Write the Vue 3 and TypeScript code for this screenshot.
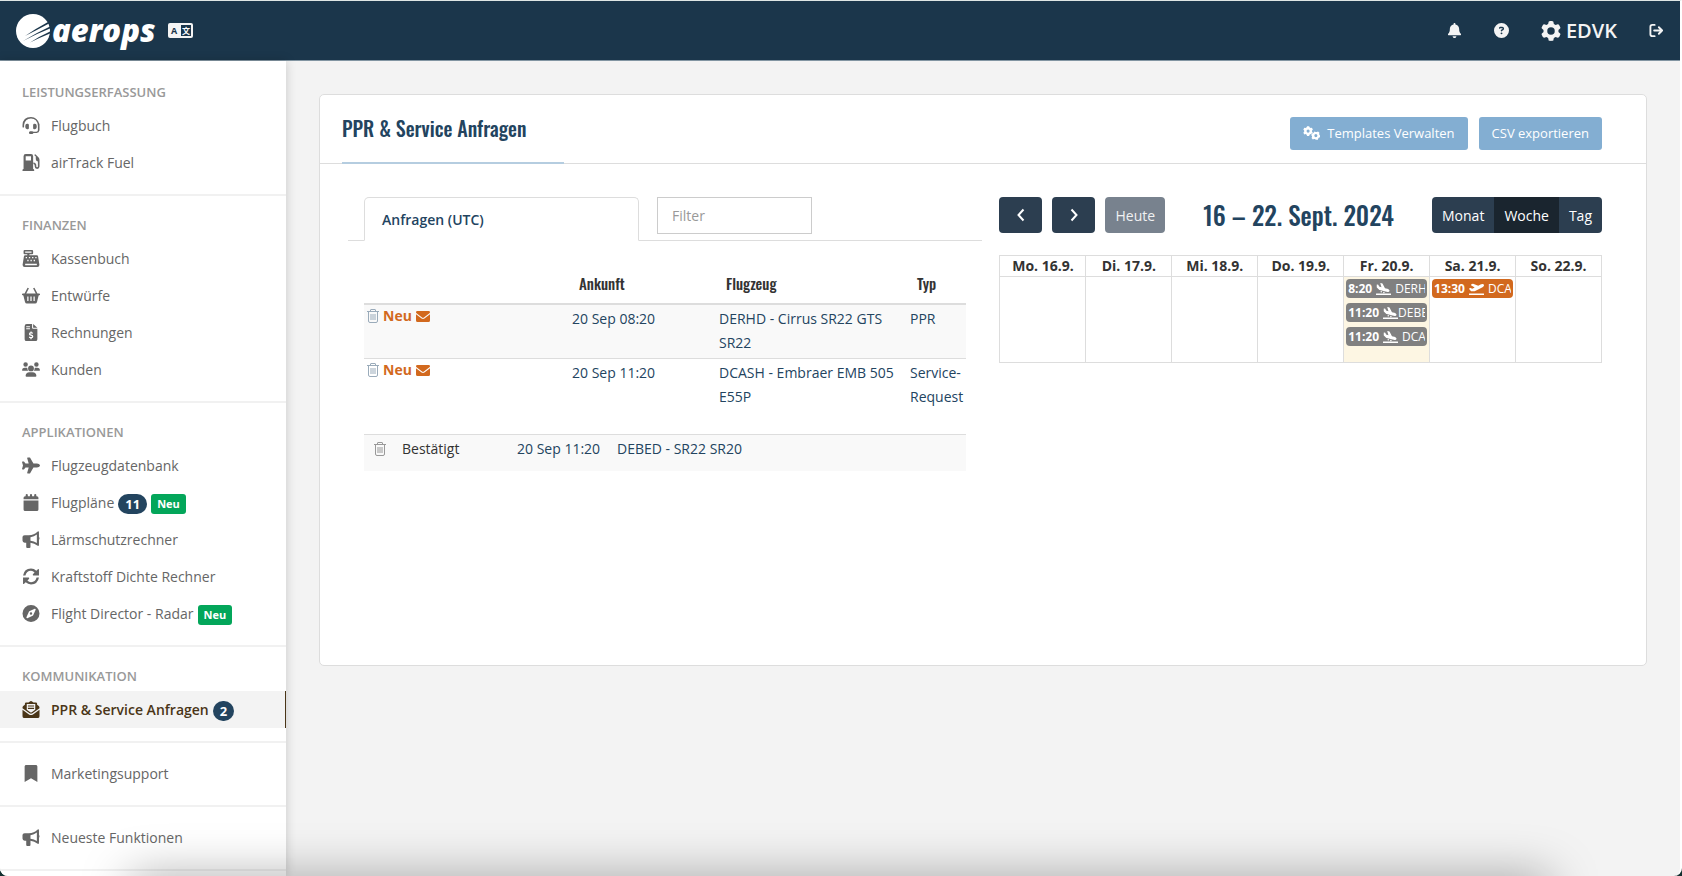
<script setup lang="ts">
import { ref } from 'vue'

interface NavItem {
  label: string
  icon: string
  count?: number
  isNew?: boolean
  active?: boolean
}
interface NavSection {
  title?: string
  items: NavItem[]
}
interface Shape {
  box: string
  d: string
}
interface FlightEvent {
  time: string
  kind: 'arrival' | 'departure'
  text: string
  tight?: boolean
}
interface Day {
  label: string
  today?: boolean
  events: FlightEvent[]
}

const icons: Record<string, Shape> = {
  bell: {
    box: '0 0 448 512',
    d: 'M224 0c-17.7 0-32 14.3-32 32V51.2C119 66 64 130.6 64 208v18.8c0 47-17.3 92.4-48.5 127.6l-7.4 8.3c-8.4 9.4-10.4 22.9-5.3 34.4S19.4 416 32 416H416c12.6 0 24-7.4 29.2-18.9s3.1-25-5.3-34.4l-7.4-8.3C401.3 319.2 384 273.9 384 226.8V208c0-77.4-55-142-128-156.8V32c0-17.7-14.3-32-32-32zm45.3 493.3c12-12 18.7-28.3 18.7-45.3H224 160c0 17 6.7 33.3 18.7 45.3s28.3 18.7 45.3 18.7s33.3-6.7 45.3-18.7z',
  },
  question: {
    box: '0 0 512 512',
    d: 'M256 512A256 256 0 1 0 256 0a256 256 0 1 0 0 512zM169.8 165.3c7.9-22.3 29.1-37.3 52.8-37.3h58.3c34.9 0 63.1 28.3 63.1 63.1c0 22.6-12.1 43.5-31.7 54.8L280 264.4c-.2 13-10.9 23.6-24 23.6c-13.3 0-24-10.7-24-24V250.5c0-8.6 4.6-16.5 12.1-20.8l44.3-25.4c4.7-2.7 7.6-7.7 7.6-13.1c0-8.4-6.8-15.1-15.1-15.1H222.6c-3.4 0-6.4 2.1-7.5 5.3l-.4 1.2c-4.4 12.5-18.2 19-30.6 14.6s-19-18.2-14.6-30.6l.4-1.2zM224 352a32 32 0 1 1 64 0 32 32 0 1 1 -64 0z',
  },
  gear: {
    box: '0 0 512 512',
    d: 'M495.9 166.6c3.2 8.7 .5 18.4-6.4 24.6l-43.3 39.4c1.1 8.3 1.7 16.8 1.7 25.4s-.6 17.1-1.7 25.4l43.3 39.4c6.9 6.2 9.6 15.9 6.4 24.6c-4.4 11.9-9.7 23.3-15.8 34.3l-4.7 8.1c-6.6 11-14 21.4-22.1 31.2c-5.9 7.2-15.7 9.6-24.5 6.8l-55.7-17.7c-13.4 10.3-28.2 18.9-44 25.4l-12.5 57.1c-2 9.1-9 16.3-18.2 17.8c-13.8 2.3-28 3.5-42.5 3.5s-28.7-1.2-42.5-3.5c-9.2-1.5-16.2-8.7-18.2-17.8l-12.5-57.1c-15.8-6.5-30.6-15.1-44-25.4L83.1 425.9c-8.8 2.8-18.6 .3-24.5-6.8c-8.1-9.8-15.5-20.2-22.1-31.2l-4.7-8.1c-6.1-11-11.4-22.4-15.8-34.3c-3.2-8.7-.5-18.4 6.4-24.6l43.3-39.4C64.6 273.1 64 264.6 64 256s.6-17.1 1.7-25.4L22.4 191.2c-6.9-6.2-9.6-15.9-6.4-24.6c4.4-11.9 9.7-23.3 15.8-34.3l4.7-8.1c6.6-11 14-21.4 22.1-31.2c5.9-7.2 15.7-9.6 24.5-6.8l55.7 17.7c13.4-10.3 28.2-18.9 44-25.4l12.5-57.1c2-9.1 9-16.3 18.2-17.8C227.3 1.2 241.5 0 256 0s28.7 1.2 42.5 3.5c9.2 1.5 16.2 8.7 18.2 17.8l12.5 57.1c15.8 6.5 30.6 15.1 44 25.4l55.7-17.7c8.8-2.8 18.6-.3 24.5 6.8c8.1 9.8 15.5 20.2 22.1 31.2l4.7 8.1c6.1 11 11.4 22.4 15.8 34.3zM256 352a96 96 0 1 0 0-192 96 96 0 1 0 0 192z',
  },
  plane: {
    box: '0 0 576 512',
    d: 'M480 192H365.71L260.61 8.06A16.014 16.014 0 0 0 246.71 0h-65.5c-10.63 0-18.3 10.17-15.38 20.39L214.86 192H112l-43.2-57.6c-3.02-4.03-7.77-6.4-12.8-6.4H16.01C5.6 128-2.04 137.78.49 147.88L32 256 .49 364.12C-2.04 374.22 5.6 384 16.01 384H56c5.04 0 9.78-2.37 12.8-6.4L112 320h102.86l-49.03 171.6c-2.92 10.22 4.75 20.4 15.38 20.4h65.5c5.74 0 11.04-3.08 13.89-8.06L365.71 320H480c35.35 0 96-28.65 96-64s-60.65-64-96-64z',
  },
  arrival: {
    box: '0 0 640 512',
    d: 'M624 448H16c-8.84 0-16 7.16-16 16v32c0 8.84 7.16 16 16 16h608c8.84 0 16-7.16 16-16v-32c0-8.84-7.16-16-16-16zM44.81 205.66l88.74 80a62.607 62.607 0 0 0 25.47 13.93l287.6 78.35c26.48 7.21 54.56 8.72 81 1.36 29.67-8.27 43.44-21.21 47.25-35.71 3.83-14.5-1.73-32.71-23.37-54.96-19.28-19.82-44.35-32.79-70.83-40l-97.51-26.56L282.8 30.22c-1.51-5.81-5.95-10.35-11.66-11.91L206.05.58c-10.56-2.88-20.9 5.32-20.71 16.44l47.92 164.21-102.2-27.84-27.59-67.88c-1.93-4.89-6.01-8.57-11.02-9.93L52.72 64.75c-10.34-2.82-20.53 5-20.72 15.88l.23 101.78c.19 8.91 6.03 17.34 12.58 23.25zM224 336a32 32 0 1 1 0 64 32 32 0 0 1 0-64zM336 368a32 32 0 1 1 0 64 32 32 0 0 1 0-64z',
  },
  departure: {
    box: '0 0 640 512',
    d: 'M624 448H16c-8.84 0-16 7.16-16 16v32c0 8.84 7.16 16 16 16h608c8.84 0 16-7.16 16-16v-32c0-8.84-7.16-16-16-16zM80.55 341.27c6.28 6.84 15.1 10.72 24.33 10.71l130.54-.18a65.62 65.62 0 0 0 29.64-7.12l290.96-147.65c26.74-13.57 50.71-32.94 67.02-58.31 18.31-28.48 20.3-49.09 13.07-63.65-7.21-14.57-24.74-25.27-58.25-27.45-29.85-1.94-59.54 5.92-86.28 19.48l-98.51 49.99-218.7-82.06a17.799 17.799 0 0 0-18-1.11L90.62 67.29c-10.67 5.41-13.25 19.65-5.17 28.53l156.22 98.1-103.21 52.38-72.35-36.47a17.804 17.804 0 0 0-16.07.02L9.91 230.22c-10.44 5.3-13.19 19.12-5.57 28.08l76.21 82.97z',
  },
  bookmark: {
    box: '0 0 512 512',
    d: 'M64 512V48C64 21.49 85.49 0 112 0h288c26.51 0 48 21.49 48 48v464L256 400 64 512z',
  },
  fuel: {
    box: '0 0 512 512',
    d: 'M32 64a64 64 0 0 1 64-64H256a64 64 0 0 1 64 64V448a32 32 0 0 1 32 32v32H0V480a32 32 0 0 1 32-32zM96 64V192H256V64zM350 30 386 8 480 96Q512 128 512 170V376a72 72 0 0 1-144 0V352Q368 312 330 304V256Q416 262 416 352V376a24 24 0 0 0 48 0V224Q400 216 400 160V76z',
  },
  register: {
    box: '0 0 512 512',
    d: 'M64 0H288a32 32 0 0 1 32 32V96a32 32 0 0 1-32 32H208v32H432Q464 160 470 192L508 440Q514 512 448 512H64Q-2 512 4 440L42 192Q48 160 80 160H144V128H64A32 32 0 0 1 32 96V32A32 32 0 0 1 64 0zM80 44V84H272V44zM96 208v40h40v-40zM192 208v40h40v-40zM288 208v40h40v-40zM384 208v40h40v-40zM144 296v40h40v-40zM240 296v40h40v-40zM336 296v40h40v-40zM80 416v40H432v-40z',
  },
  basket: {
    box: '0 0 576 512',
    d: 'M178 4 222 26 136 192H440L354 26 398 4 494 192H552a24 24 0 0 1 0 52L532 256 480 464Q468 512 420 512H156Q108 512 96 464L44 256 24 244a24 24 0 0 1 0-52H82zM168 288V432H208V288zM268 288V432H308V288zM368 288V432H408V288z',
  },
  invoice: {
    box: '0 0 512 512',
    d: 'M128 0H288V112Q288 144 320 144H448V456Q448 512 392 512H120Q64 512 64 456V64Q64 0 128 0zM320 0 448 112H320zM112 64V96H224V64zM112 128V160H224V128zM240 224V252Q192 260 194 306Q196 340 250 354Q292 364 288 382Q280 400 244 392L204 378 192 414 238 430V460H274V430Q324 422 326 378Q326 334 266 318Q228 308 232 294Q240 280 276 288L308 296 318 262 276 252V224z',
  },
  users: {
    box: '0 0 640 512',
    d: 'M128 0a80 80 0 1 1 0 160A80 80 0 0 1 128 0zM512 0a80 80 0 1 1 0 160A80 80 0 0 1 512 0zM320 112a104 104 0 1 1 0 208 104 104 0 0 1 0-208zM100 192H170Q190 192 192 224Q190 270 222 300H20Q0 300 0 276Q8 192 100 192zM470 192H540Q632 192 640 276Q640 300 620 300H418Q450 270 448 224Q450 192 470 192zM260 352H380Q500 356 512 480Q512 512 480 512H160Q128 512 128 480Q140 356 260 352z',
  },
  calendar: {
    box: '0 0 512 512',
    d: 'M128 0Q160 0 160 32V64H224V32Q224 0 256 0Q288 0 288 32V64H352V32Q352 0 384 0Q416 0 416 32V64H432Q480 64 480 112V160H32V112Q32 64 80 64H96V32Q96 0 128 0zM32 192H480V464Q480 512 432 512H80Q32 512 32 464z',
  },
  bullhorn: {
    box: '0 0 512 512',
    d: 'M448 20Q490-12 496 32V180Q528 208 496 268V420Q486 470 444 436Q364 366 240 354V480Q240 512 208 512H144Q112 512 112 480V352H64Q0 352 0 288V184Q0 128 64 128H192Q352 120 448 20zM432 108Q350 176 240 188V292Q350 302 432 360z',
  },
  sync: {
    box: '0 0 512 512',
    d: 'M16 224Q50 24 256 16Q350 18 416 82L464 34Q496 16 496 56V224H326Q292 216 318 182L364 136Q316 84 256 84Q120 88 88 224zM496 288Q462 488 256 496Q162 494 96 430L48 478Q16 496 16 456V288H186Q220 296 194 330L148 376Q196 428 256 428Q392 424 424 288z',
  },
  compass: {
    box: '0 0 512 512',
    d: 'M256 0a256 256 0 1 0 0 512A256 256 0 0 0 256 0zM390 120Q402 126 396 144L322 306Q318 318 306 322L146 396Q116 400 118 370L190 208Q194 196 206 190L368 116Q380 112 390 120zM256 220a36 36 0 1 0 0 72 36 36 0 0 0 0-72z',
  },
  mailOpen: {
    box: '0 0 512 512',
    d: 'M256 0Q272 0 300 24L330 44H400Q440 44 440 84V112L490 152Q512 170 512 200V216L300 372Q256 400 212 372L0 216V200Q0 170 22 152L72 112V84Q72 44 112 44H182L212 24Q240 0 256 0zM128 92V262L234 340Q256 352 278 340L384 262V92zM164 132H348V168H164zM164 204H348V240H164zM0 262 196 408Q256 440 316 408L512 262V456Q512 512 456 512H56Q0 512 0 456z',
  },
  mail: {
    box: '0 0 512 400',
    d: 'M48 0H464Q512 0 512 44Q512 66 492 84L290 240Q256 262 222 240L20 84Q0 66 0 44Q0 0 48 0zM0 116 204 272Q256 306 308 272L512 116V344Q512 400 456 400H56Q0 400 0 344z',
  },
  headset: {
    box: '0 0 512 512',
    d: 'M256 0Q450 6 512 220V400Q502 478 424 484H330Q320 512 288 512H230Q194 508 194 472Q196 434 230 430H288Q318 430 330 446H416Q460 442 464 400V260Q440 54 256 48Q72 54 48 240V300Q46 318 24 318Q2 318 0 300V240Q12 6 256 0zM136 204H158Q188 206 192 238V336Q190 364 158 368H136Q88 360 84 310V262Q88 212 136 204zM354 204H376Q424 212 428 262V310Q424 360 376 368H354Q322 364 320 336V238Q324 206 354 204z',
  },
  gears: {
    box: '0 0 640 512',
    d: 'M152 0H232L244 44 290 70 334 58 372 124 340 158V210L372 244 334 310 290 298 244 324 232 368H152L140 324 94 298 50 310 12 244 44 210V158L12 124 50 58 94 70 140 44zM192 126a58 58 0 1 0 0 116 58 58 0 0 0 0-116zM432 196 480 222H520L566 196 620 246 606 296 624 334 640 350V420L592 436 570 468 564 512H480L452 484H412L372 498 320 440 342 396 332 360 304 330 324 262 374 262 404 236zM484 296a58 58 0 1 0 0 116 58 58 0 0 0 0-116z',
  },
}

const sections: NavSection[] = [
  {
    title: 'Leistungserfassung',
    items: [
      { label: 'Flugbuch', icon: 'headset' },
      { label: 'airTrack Fuel', icon: 'fuel' },
    ],
  },
  {
    title: 'Finanzen',
    items: [
      { label: 'Kassenbuch', icon: 'register' },
      { label: 'Entwürfe', icon: 'basket' },
      { label: 'Rechnungen', icon: 'invoice' },
      { label: 'Kunden', icon: 'users' },
    ],
  },
  {
    title: 'Applikationen',
    items: [
      { label: 'Flugzeugdatenbank', icon: 'plane' },
      { label: 'Flugpläne', icon: 'calendar', count: 11, isNew: true },
      { label: 'Lärmschutzrechner', icon: 'bullhorn' },
      { label: 'Kraftstoff Dichte Rechner', icon: 'sync' },
      { label: 'Flight Director - Radar', icon: 'compass', isNew: true },
    ],
  },
  {
    title: 'Kommunikation',
    items: [{ label: 'PPR & Service Anfragen', icon: 'mailOpen', count: 2, active: true }],
  },
  { items: [{ label: 'Marketingsupport', icon: 'bookmark' }] },
  { items: [{ label: 'Neueste Funktionen', icon: 'bullhorn' }] },
]

const requests = [
  { arrival: '20 Sep 08:20', aircraft: 'DERHD - Cirrus SR22 GTS SR22', type: 'PPR' },
  { arrival: '20 Sep 11:20', aircraft: 'DCASH - Embraer EMB 505 E55P', type: 'Service-Request' },
]

const days: Day[] = [
  { label: 'Mo. 16.9.', events: [] },
  { label: 'Di. 17.9.', events: [] },
  { label: 'Mi. 18.9.', events: [] },
  { label: 'Do. 19.9.', events: [] },
  {
    label: 'Fr. 20.9.',
    today: true,
    events: [
      { time: '8:20', kind: 'arrival', text: 'DERHD' },
      { time: '11:20', kind: 'arrival', text: 'DEBED', tight: true },
      { time: '11:20', kind: 'arrival', text: 'DCASH' },
    ],
  },
  { label: 'Sa. 21.9.', events: [{ time: '13:30', kind: 'departure', text: 'DCASH' }] },
  { label: 'So. 22.9.', events: [] },
]

const views = ['Monat', 'Woche', 'Tag']
const view = ref('Woche')
const filter = ref('')
</script>

<template>
  <div class="window">
    <header class="topbar">
      <a class="brand" href="#" aria-label="aerops">
        <svg class="brand-mark" viewBox="0 0 34 34" aria-hidden="true">
          <circle cx="17" cy="17" r="17" fill="#fff" />
          <g fill="#1b364b">
            <path d="M9 22Q19 15 32 8L33 9.500Q21 16 9 22z" />
            <path d="M7 27Q20 19 34 12.500L34 14.500Q20 20 7 27z" />
            <path d="M14 28.500Q24 22 34 17.500L34 19.500Q24 23.500 14 28.500z" />
          </g>
        </svg>
        <span class="brand-name">aerops</span>
      </a>
      <button class="language" type="button" aria-label="Sprache">
        <svg viewBox="0 0 25 15" aria-hidden="true">
          <rect width="25" height="15" rx="2" fill="#f4f4f4" />
          <rect x="13" y="2" width="10" height="11" fill="#1b364b" />
          <text x="3" y="11" class="lang-latin">A</text>
          <text x="14" y="11" class="lang-cjk">文</text>
        </svg>
      </button>
      <nav class="tools" aria-label="Konto">
        <button type="button" aria-label="Benachrichtigungen">
          <svg class="tool-icon" :viewBox="icons.bell.box"><path :d="icons.bell.d" /></svg>
        </button>
        <button type="button" aria-label="Hilfe">
          <svg class="tool-icon" :viewBox="icons.question.box"><path fill-rule="evenodd" :d="icons.question.d" /></svg>
        </button>
        <button type="button" class="station">
          <svg class="gear-icon" :viewBox="icons.gear.box"><path fill-rule="evenodd" :d="icons.gear.d" /></svg>
          <span>EDVK</span>
        </button>
        <button type="button" aria-label="Abmelden">
          <svg class="tool-icon exit" viewBox="0 0 16 14">
            <path d="M6 1H3.500Q1.500 1 1.500 3V11Q1.500 13 3.500 13H6M5.500 7H14M10.500 3.500 14 7 10.500 10.500" />
          </svg>
        </button>
      </nav>
    </header>

    <div class="body">
      <aside class="sidebar">
        <section
          v-for="(section, i) in sections"
          :key="i"
          class="group"
        >
          <h2 v-if="section.title" class="group-title">{{ section.title }}</h2>
          <a
            v-for="item in section.items"
            :key="item.label"
            href="#"
            class="nav-item"
            :class="{ active: item.active }"
          >
            <svg class="nav-icon" :viewBox="icons[item.icon].box" aria-hidden="true">
              <path fill-rule="evenodd" :d="icons[item.icon].d" />
            </svg>
            <span>{{ item.label }}</span>
            <span v-if="item.count" class="count">{{ item.count }}</span>
            <span v-if="item.isNew" class="new">Neu</span>
          </a>
        </section>
      </aside>

      <main class="main">
        <div class="card">
          <div class="card-head">
            <h1 class="title">PPR &amp; Service Anfragen</h1>
            <div class="actions">
              <button type="button" class="action">
                <svg class="gears-icon" :viewBox="icons.gears.box" aria-hidden="true">
                  <path fill-rule="evenodd" :d="icons.gears.d" />
                </svg>
                <span>Templates Verwalten</span>
              </button>
              <button type="button" class="action">CSV exportieren</button>
            </div>
          </div>

          <div class="card-body">
            <section class="requests">
              <div class="tabs">
                <button type="button" class="tab">Anfragen (UTC)</button>
                <input v-model="filter" class="filter" type="text" placeholder="Filter" aria-label="Filter" />
              </div>
              <div class="lists">
                <table class="open-list">
                  <thead>
                    <tr>
                      <th class="col-state"></th>
                      <th class="col-date">Ankunft</th>
                      <th class="col-craft">Flugzeug</th>
                      <th class="col-type">Typ</th>
                    </tr>
                  </thead>
                  <tbody>
                    <tr v-for="row in requests" :key="row.arrival">
                      <td class="state">
                        <div class="state-line">
                          <button type="button" class="trash" aria-label="Löschen">
                            <svg viewBox="0 0 12 14">
                              <path d="M0 2.500H12M3.500 2.500V1Q3.500.5 4 .5H8Q8.500.5 8.500 1V2.500M1.500 2.500V12Q1.500 13.500 3 13.500H9Q10.500 13.500 10.500 12V2.500M4 5V11M6 5V11M8 5V11" />
                            </svg>
                          </button>
                          <strong>Neu</strong>
                          <svg class="mail" :viewBox="icons.mail.box" aria-hidden="true"><path :d="icons.mail.d" /></svg>
                        </div>
                      </td>
                      <td>{{ row.arrival }}</td>
                      <td>{{ row.aircraft }}</td>
                      <td>{{ row.type }}</td>
                    </tr>
                  </tbody>
                </table>
                <table class="done-list">
                  <tbody>
                    <tr>
                      <td class="done-trash">
                        <button type="button" class="trash grey" aria-label="Löschen">
                          <svg viewBox="0 0 12 14">
                            <path d="M0 2.500H12M3.500 2.500V1Q3.500.5 4 .5H8Q8.500.5 8.500 1V2.500M1.500 2.500V12Q1.500 13.500 3 13.500H9Q10.500 13.500 10.500 12V2.500M4 5V11M6 5V11M8 5V11" />
                          </svg>
                        </button>
                      </td>
                      <td class="done-state">Bestätigt</td>
                      <td class="done-date">20 Sep 11:20</td>
                      <td>DEBED - SR22 SR20</td>
                    </tr>
                  </tbody>
                </table>
              </div>
            </section>

            <section class="calendar">
              <div class="cal-bar">
                <div class="cal-nav">
                  <button type="button" class="arrow" aria-label="Zurück">
                    <svg viewBox="0 0 10 14"><path d="M7.500 1.500 2.500 7 7.500 12.500" /></svg>
                  </button>
                  <button type="button" class="arrow" aria-label="Weiter">
                    <svg viewBox="0 0 10 14"><path d="M2.500 1.500 7.500 7 2.500 12.500" /></svg>
                  </button>
                  <button type="button" class="today-btn">Heute</button>
                </div>
                <h2 class="range">16 – 22. Sept. 2024</h2>
                <div class="views">
                  <button
                    v-for="name in views"
                    :key="name"
                    type="button"
                    :class="{ on: view === name }"
                    @click="view = name"
                  >{{ name }}</button>
                </div>
              </div>
              <table class="week">
                <thead>
                  <tr><th v-for="day in days" :key="day.label">{{ day.label }}</th></tr>
                </thead>
                <tbody>
                  <tr>
                    <td v-for="day in days" :key="day.label" :class="{ today: day.today }">
                      <a
                        v-for="(event, i) in day.events"
                        :key="i"
                        href="#"
                        class="event"
                        :class="[event.kind, { tight: event.tight }]"
                      >
                        <b>{{ event.time }}</b>
                        <svg :viewBox="icons[event.kind].box" aria-hidden="true"><path :d="icons[event.kind].d" /></svg>
                        <span>{{ event.text }}</span>
                      </a>
                    </td>
                  </tr>
                </tbody>
              </table>
            </section>
          </div>
        </div>
      </main>
    </div>
    <div class="dock-shadow"></div>
  </div>
</template>

<style>
html,
body {
  background: #12302f;
}
body {
  margin: 0;
}
</style>

<style scoped>
* {
  box-sizing: border-box;
}
.window {
  position: relative;
  display: flex;
  flex-direction: column;
  height: 100vh;
  overflow: hidden;
  border-top: 1px solid #dfe6e4;
  border-right: 2px solid #fff;
  border-radius: 0 0 8px 8px;
  background: #f3f3f3;
  color: #333;
  font-family: 'Open Sans', 'Noto Sans', sans-serif;
  font-size: 14px;
}
button {
  margin: 0;
  padding: 0;
  border: 0;
  background: none;
  color: inherit;
  font: inherit;
  cursor: pointer;
}
a {
  color: inherit;
  text-decoration: none;
}
svg {
  display: block;
  flex: none;
  fill: currentColor;
}

/* top bar */
.topbar {
  display: flex;
  flex: none;
  align-items: center;
  height: 60px;
  padding: 0 16px;
  border-bottom: 1px solid #8295a2;
  background: #1b364b;
  color: #f4f4f4;
}
.brand {
  display: flex;
  align-items: center;
  gap: 2px;
  color: #fff;
}
.brand-mark {
  width: 34px;
  height: 34px;
}
.brand-name {
  margin-bottom: 2px;
  font-size: 31px;
  font-style: italic;
  font-weight: 800;
  line-height: 36px;
}
.language {
  margin-left: 12px;
}
.language svg {
  width: 25px;
  height: 15px;
}
.lang-latin {
  fill: #1b364b;
  font: 700 9px 'Open Sans', sans-serif;
}
.lang-cjk {
  fill: #fff;
  font: 700 8px 'Noto Sans CJK SC', sans-serif;
}
.tools {
  display: flex;
  align-items: center;
  margin-left: auto;
  gap: 32px;
}
.tool-icon {
  width: 15px;
  height: 15px;
}
.exit {
  fill: none;
  stroke: currentColor;
  stroke-width: 2;
  stroke-linecap: round;
  stroke-linejoin: round;
}
.station {
  display: flex;
  align-items: center;
  gap: 5px;
  font-size: 20px;
  font-weight: 600;
}
.gear-icon {
  width: 20px;
  height: 20px;
}

/* sidebar */
.body {
  display: flex;
  flex: 1;
  min-height: 0;
}
.sidebar {
  flex: none;
  width: 286px;
  overflow: hidden;
  background: #fff;
  box-shadow: 0 0 10px rgba(0, 0, 0, 0.18);
  color: #666;
}
.group {
  padding: 12px 0 13px;
  border-bottom: 2px solid #f1f1f1;
}
.group:first-child {
  padding-top: 14px;
}
.group-title {
  height: 32px;
  margin: 0;
  padding: 7px 22px 0;
  color: #999;
  font-size: 13px;
  font-weight: 600;
  line-height: 20px;
  text-transform: uppercase;
}
.nav-item {
  display: flex;
  align-items: center;
  height: 37px;
  padding: 0 22px;
}
.nav-icon {
  width: 18px;
  height: 17px;
  margin-right: 11px;
}
.nav-item.active {
  border-right: 1px solid #4a3517;
  background: #f3f3f3;
  color: #4a3517;
  font-weight: 600;
}
.count,
.new {
  margin-top: 2px;
  margin-left: 4px;
  color: #fff;
  font-weight: 700;
  line-height: 20px;
}
.count {
  padding: 0 7px;
  border-radius: 10px;
  background: #23445f;
  font-size: 13px;
}
.new {
  padding: 0 6px;
  border-radius: 3px;
  background: #03a65a;
  font-size: 11px;
}

/* card */
.main {
  flex: 1;
  min-width: 0;
  padding: 33px 33px 0;
}
.card {
  min-height: 572px;
  border: 1px solid #ddd;
  border-radius: 5px;
  background: #fff;
}
.card-head {
  display: flex;
  align-items: stretch;
  justify-content: space-between;
  height: 69px;
  padding: 0 44px 0 22px;
  border-bottom: 1px solid #ddd;
}
.title {
  width: 222px;
  height: 69px;
  margin: 0;
  border-bottom: 2px solid #b5cde0;
  color: #23445f;
  font-family: Oswald, 'Liberation Sans Narrow', sans-serif;
  font-size: 20px;
  font-weight: 500;
  line-height: 66px;
  white-space: nowrap;
}
.actions {
  display: flex;
  align-items: center;
  gap: 11px;
  padding-top: 8px;
}
.action {
  display: flex;
  align-items: center;
  gap: 7px;
  height: 33px;
  padding: 0 13px;
  border-radius: 3px;
  background: #83aed2;
  color: #fff;
  font-size: 13px;
}
.gears-icon {
  width: 17px;
  height: 14px;
}
.card-body {
  display: flex;
  gap: 17px;
  padding: 33px 44px 33px 28px;
}

/* request list */
.requests {
  flex: 635 1 0;
  min-width: 0;
}
.tabs {
  display: flex;
  align-items: flex-start;
  gap: 18px;
  height: 44px;
  padding: 0 16px;
  border-bottom: 1px solid #ddd;
}
.tab {
  width: 275px;
  height: 44px;
  padding: 0 17px;
  border: 1px solid #ddd;
  border-bottom-color: #fff;
  border-radius: 5px 5px 0 0;
  background: #fff;
  color: #23445f;
  font-weight: 600;
  text-align: left;
}
.filter {
  width: 155px;
  height: 37px;
  padding: 0 14px;
  border: 1px solid #ccc;
  border-radius: 0;
  background: #fff;
  color: #555;
  font: inherit;
}
.filter::placeholder {
  color: #999;
  opacity: 1;
}
.lists {
  padding: 22px 16px 0;
}
table {
  width: 100%;
  border-collapse: collapse;
  table-layout: fixed;
}
.open-list th {
  height: 41px;
  padding: 0 7px;
  border-bottom: 2px solid #ddd;
  font-family: Oswald, 'Liberation Sans Narrow', sans-serif;
  font-size: 15px;
  font-weight: 500;
  text-align: left;
}
.col-state {
  width: 208px;
}
.col-date {
  width: 147px;
}
.col-craft {
  width: 191px;
}
.open-list td,
.done-list td {
  padding: 2px 0 3px;
  color: #23445f;
  line-height: 24px;
  vertical-align: top;
}
.open-list tbody tr:nth-child(odd) {
  background: #f9f9f9;
}
.open-list tbody tr + tr {
  height: 75px;
  border-top: 1px solid #ddd;
}
.open-list .state {
  padding: 0 3px;
}
.state-line {
  display: flex;
  align-items: center;
  gap: 4px;
  color: #d2691e;
  line-height: 22px;
}
.trash {
  display: block;
  color: #9aabba;
}
.trash svg {
  width: 12px;
  height: 14px;
  fill: none;
  stroke: currentColor;
}
.trash.grey {
  color: #999;
}
.mail {
  width: 14px;
  height: 11px;
}
.done-list {
  border-top: 1px solid #ddd;
  background: #f9f9f9;
}
.done-list tr {
  height: 37px;
}
.done-list .done-trash {
  width: 38px;
  padding: 7px 10px 0;
}
.done-list .done-state {
  width: 115px;
  color: #333;
}
.done-date {
  width: 100px;
}

/* calendar */
.calendar {
  flex: 603 1 0;
  min-width: 0;
}
.cal-bar {
  display: flex;
  align-items: center;
  justify-content: space-between;
  height: 36px;
  margin-bottom: 22px;
}
.cal-nav {
  display: flex;
  gap: 10px;
}
.arrow {
  display: flex;
  align-items: center;
  justify-content: center;
  width: 43px;
  height: 36px;
  border-radius: 4px;
  background: #2c3e50;
  color: #fff;
}
.arrow svg {
  width: 10px;
  height: 14px;
  fill: none;
  stroke: currentColor;
  stroke-width: 2;
}
.today-btn {
  height: 36px;
  padding: 0 10px;
  border-radius: 4px;
  background: #78828e;
  color: #f0f1f2;
}
.range {
  margin: 0;
  color: #23445f;
  font-family: Oswald, 'Liberation Sans Narrow', sans-serif;
  font-size: 25px;
  font-weight: 500;
  line-height: 36px;
  white-space: nowrap;
}
.views {
  display: flex;
  overflow: hidden;
  border-radius: 4px;
  background: #2c3e50;
  color: #fff;
}
.views button {
  height: 36px;
  padding: 0 10px;
}
.views .on {
  background: #1a252f;
}
.week th,
.week td {
  border: 1px solid #ddd;
}
.week th {
  height: 21px;
  padding: 0 0 1px;
  font-weight: 700;
  line-height: 19px;
}
.week td {
  height: 86px;
  padding: 2px 2px 0;
  vertical-align: top;
}
.week .today {
  background: #fdf6e3;
}
.event {
  display: flex;
  align-items: center;
  gap: 4px;
  overflow: hidden;
  height: 19px;
  margin-bottom: 5px;
  padding: 0 2px;
  border-radius: 4px;
  color: #fff;
  font-size: 12px;
  white-space: nowrap;
}
.event svg {
  width: 15px;
  height: 12px;
}
.event span {
  flex: 1;
  min-width: 0;
  overflow: hidden;
}
.event.tight span {
  margin-left: -4px;
}
.event.arrival {
  background: #808080;
}
.event.departure {
  background: #d2691e;
}

/* soft shade along the lower window edge */
.dock-shadow {
  position: absolute;
  right: 130px;
  bottom: -40px;
  left: 130px;
  height: 40px;
  box-shadow: 0 0 48px rgba(0, 0, 0, 0.34);
  pointer-events: none;
}
</style>
